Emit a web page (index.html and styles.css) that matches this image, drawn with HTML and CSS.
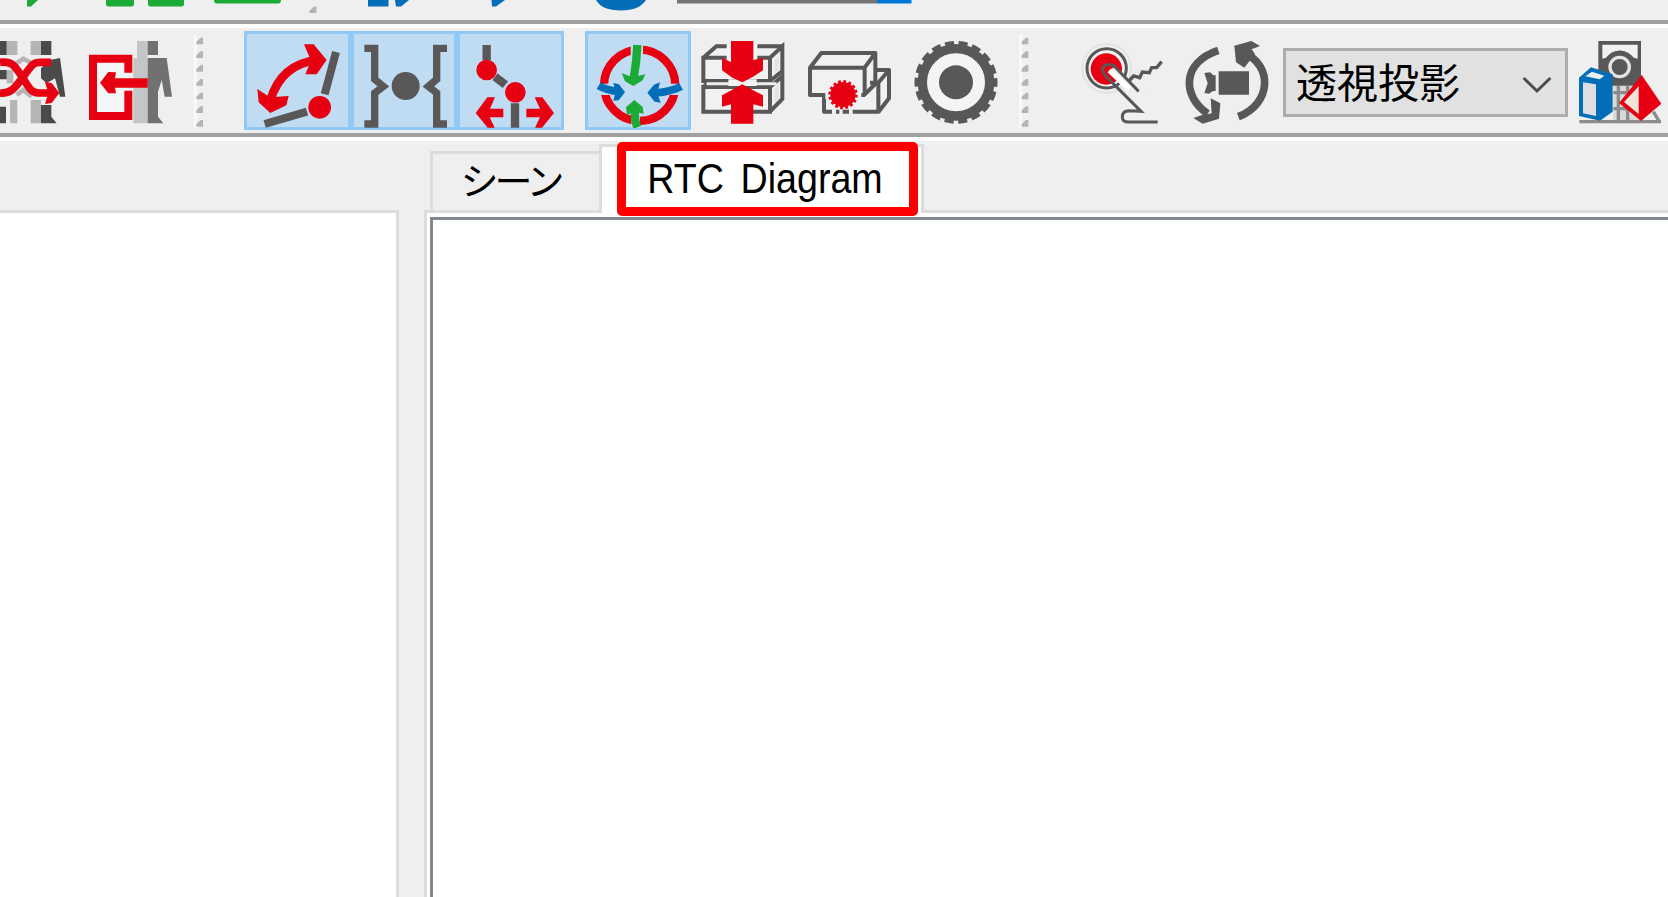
FILE: index.html
```html
<!DOCTYPE html>
<html lang="ja">
<head>
<meta charset="utf-8">
<title>RTC Diagram</title>
<link rel="stylesheet" href="styles.css">
</head>
<body>
<svg width="0" height="0" class="defs">
  <defs>
    <g id="dot"><path d="M0 12V20H20V0H13Z" fill="#b4b4b4"/></g>
    <g id="grip">
      <path d="M-3 -10V272" stroke="#f8f8f8" stroke-width="10"/>
      <use href="#dot"/><use href="#dot" y="41"/><use href="#dot" y="82"/><use href="#dot" y="124"/><use href="#dot" y="165"/><use href="#dot" y="206"/><use href="#dot" y="247"/>
    </g>
  </defs>
</svg>
<div class="app">
  <header class="toolbar toolbar-top">
    <svg width="1668" height="20" viewBox="0 0 1668 20">
      <g fill="#1aaa35">
        <path d="M27 0H38L31 6.500H27Z"/><path d="M106 0H134V4Q134 6.500 131 6.500H109Q106 6.500 106 4Z"/><path d="M148 0H184V4Q184 6.500 181 6.500H151Q148 6.500 148 4Z"/><path d="M214 0H281Q281 3.500 278 3.500H217Q214 3.500 214 0Z"/>
      </g>
      <path d="M309 11L314 6.500H316.500V13H310Z" fill="#b4b4b4"/>
      <g fill="#036eb8"><path d="M368 0H388.500V6.500H368Z"/><path d="M395 0H409L401 6.500H396Z"/><path d="M491.500 0H505L496 6.500H492Z"/><path d="M596 0Q602 10.500 621 10.500Q639 10.500 646 0Z"/></g>
      <path d="M677 0H877V3.500H677Z" fill="#747474"/><path d="M877 0H911.500V3.500H877Z" fill="#0078d7"/>
    </svg>
  </header>
  <div class="toolbar toolbar-main">
    <svg width="76" height="105" viewBox="0 84 228 315">
      <path d="M20 123H52V165H20ZM92 123H123V165H92ZM20 210H40V250H20ZM30 300H52V370H30ZM92 300H123V370H92Z" fill="#b5b5b6"/>
      <path d="M0 123H20V165H0ZM123 123H154V165H123ZM0 210H20V238H0ZM0 320H18V370H0ZM123 315H154V350L170 370H123ZM123 205L150 180L180 174L196 290H180L165 235L140 250L123 235Z" fill="#4c4949"/>
      <path d="M50 190L70 176L95 190M50 285L70 270L95 290" fill="none" stroke="#b5b5b6" stroke-width="14"/>
      <path d="M0 187C35 183 43 195 66 230C88 265 93 279 120 279H160M0 279C35 281 45 263 70 230C95 196 98 187 120 187H153" fill="none" stroke="#e60012" stroke-width="23"/>
      <path d="M135 246L155 249L178 279L155 309L135 312L145 280Z" fill="#e60012"/>
    </svg>
    <svg width="109" height="105" viewBox="228 84 327 315">
      <path d="M411 123H443V370H400V175H411Z" fill="#c3c6c7"/>
      <path d="M443 123H474V165H443ZM443 174H500L516 290H494L485 240L474 275V350L490 370H443Z" fill="#727171"/>
      <path d="M279 176H385V348H279Z" fill="#f2f6f6"/>
      <path d="M385 218V176H279V348H385V272" fill="none" stroke="#e60012" stroke-width="24"/>
      <path d="M443 235V263H345L348 280L325 280L300 248L325 216L348 217L345 235Z" fill="#e60012"/>
    </svg>
    <svg width="59" height="105" viewBox="555 84 177 315"><use href="#grip" x="589" y="113"/></svg>
    <button class="tool checked">
      <svg width="101" height="94" viewBox="22 101 303 282">
        <path d="M289 155L255 282M75 371L202 334" stroke="#595757" stroke-width="24"/>
        <path d="M92 300Q125 190 235 179" fill="none" stroke="#e60012" stroke-width="26"/>
        <path d="M193 132H222L261 179L231 222H197L214 181ZM53 266L91 291L147 287L140 315L92 338L57 306Z" fill="#e60012"/>
        <circle cx="240" cy="321" r="34" fill="#e60012"/>
      </svg>
    </button>
    <button class="tool checked">
      <svg width="101" height="94" viewBox="339 101 303 282">
        <path d="M373 144H404V237L430 258L404 278V371H373M621 144H590V237L565 258L590 278V371H621" fill="none" stroke="#595757" stroke-width="22"/>
        <circle cx="497" cy="257" r="42" fill="#595757"/>
      </svg>
    </button>
    <button class="tool checked">
      <svg width="101" height="94" viewBox="660 101 303 282">
        <path d="M740 134V210L825 275V382" fill="none" stroke="#595757" stroke-width="25"/>
        <path d="M740 180V210L765 229M797 252L825 275V309" fill="none" stroke="#c0dcf3" stroke-width="28"/>
        <circle cx="740" cy="209" r="31" fill="#e60012"/><circle cx="826" cy="276" r="31" fill="#e60012"/>
        <path d="M790 325V351H749L764 382H743L707 338L742 291H765L750 325ZM859 325H900L884 291H907L942 338L906 382H885L900 351H859Z" fill="#e60012"/>
      </svg>
    </button>
    <span class="gap"></span>
    <button class="tool checked alone">
      <svg width="100" height="94" viewBox="54 101 300 282">
        <circle cx="209" cy="255" r="107" fill="none" stroke="#e60012" stroke-width="25"/>
        <path d="M182 130H219V180H182ZM184 335H210V383H184ZM82 250H125V284H82ZM300 250H335V284H300Z" fill="#c0dcf3"/>
        <path d="M202 134Q200 185 191 235M196 325Q191 355 202 381" fill="none" stroke="#1aaa35" stroke-width="25"/>
        <path d="M155 218L177 227L202 227L226 222L218 240L190 257L165 243ZM193 299L218 320L221 340L196 334L171 343L168 321Z" fill="#1aaa35"/>
        <path d="M86 256Q110 270 142 273M333 258Q305 274 255 278" fill="none" stroke="#036eb8" stroke-width="23"/>
        <path d="M130 248L147 252L165 276L146 300L130 301L137 274ZM270 246L252 253L232 277L254 304L272 307L262 278Z" fill="#036eb8"/>
      </svg>
    </button>
    <svg width="104" height="105" viewBox="363 84 312 315">
      <path d="M400 173H600V243H400ZM600 173L637 139V213L600 243M400 173L439 139H637M400 261H600V335H400ZM600 261L637 229V297L600 335M400 261L420 243" fill="#f1f1f1" stroke="#595757" stroke-width="12"/>
      <path d="M613 180L626 168V210L613 221ZM613 266L626 255V295L613 310Z" fill="#e3e3e3"/>
      <path d="M410 247H620V256H410Z" fill="#efefef"/>
      <path d="M470 132H562V185H470ZM475 238H560V258H475Z" fill="#f4f4f4"/>
      <path d="M483 123H550V180L579 174V211L548 231L517 247L487 233L456 211V174L483 186ZM517 253L548 270L579 286V320L550 313V371H483V313L456 320V286L487 269Z" fill="#e60012"/>
    </svg>
    <svg width="110" height="105" viewBox="15 84 330 315">
      <g fill="#f1f1f1" stroke="#595757" stroke-width="12" stroke-linejoin="round">
        <path d="M102 285V335H266L297 295V210H259"/>
        <path d="M60 203L94 159H256V252L222 285H60Z"/>
        <path d="M60 203H224V285M224 203L256 159M240 248H265L297 210M265 248V335" fill="none"/>
      </g>
      <path d="M106 276H214V297H106Z" fill="#f1f1f1"/>
      <path d="M126 328H138V342H126ZM148 328H158V342H148ZM177 328H188V342H177Z" fill="#f1f1f1"/>
      <circle cx="159" cy="284" r="38" fill="#e60012"/><circle cx="159" cy="284" r="38" fill="none" stroke="#e60012" stroke-width="12" stroke-dasharray="8 6.900"/>
    </svg>
    <svg width="107" height="105" viewBox="345 84 321 315">
      <circle cx="498" cy="247" r="101" fill="#f4f4f4" stroke="#595757" stroke-width="28"/>
      <circle cx="498" cy="247" r="117" fill="none" stroke="#595757" stroke-width="15" stroke-dasharray="27 13.841" stroke-dashoffset="13.500"/>
      <circle cx="498" cy="247" r="51" fill="#595757"/>
    </svg>
    <svg width="58" height="105" viewBox="666 84 174 315"><use href="#grip" x="695" y="113"/></svg>
    <svg width="107" height="105" viewBox="30 84 321 315">
      <circle cx="140" cy="205" r="73" fill="none" stroke="#e3e3e3" stroke-width="6"/>
      <circle cx="140" cy="205" r="59" fill="#f3f3f3" stroke="#595757" stroke-width="9"/>
      <circle cx="139" cy="207" r="47" fill="#e60012"/>
      <path d="M148 211L243 335L185 338V364H290V290L236 274L165 200Z" fill="#efefef"/>
      <path d="M128 211C127 190 155 190 166 202L236 274M128 211Q130 223 145 236L243 334L207 332Q187 333 187 350Q187 366 205 366H293" fill="none" stroke="#595757" stroke-width="9"/>
      <path d="M148 211L208 267" stroke="#fff" stroke-width="16"/>
      <path d="M207 243L221 228L239 233L247 216L268 218L275 203L290 203L305 185" fill="none" stroke="#595757" stroke-width="10"/>
    </svg>
    <svg width="106" height="105" viewBox="351 84 318 315">
      <path d="M475 151C363 188 367 290 443 341M535 350C635 312 640 195 550 158" fill="none" stroke="#595757" stroke-width="23"/>
      <path d="M523 137L574 123L600 138L575 148L585 162L553 203L528 187ZM452 295L481 310L477 356L428 371L400 354L424 346L455 340Z" fill="#595757"/>
      <path d="M476 214H567V284H476ZM433 219L450 217L460 226H467V273H459L447 281L433 279L443 250Z" fill="#595757"/>
    </svg>
    <div class="select">
      <span class="select-text">透視投影</span>
      <svg class="arrow" width="30" height="20" viewBox="757 225 90 60"><path d="M762 234L802 273L842 234" fill="none" stroke="#4d4d4d" stroke-width="9"/></svg>
    </div>
    <svg width="100" height="105" viewBox="894 84 300 315">
      <path d="M985 123H1113V257H985Z" fill="#595757"/><path d="M997 134H1103V176L1080 170Q1050 135 1020 170L997 176Z" fill="#f2f2f2"/>
      <circle cx="1049" cy="201" r="29" fill="#595757" stroke="#e4e4e4" stroke-width="10"/>
      <path d="M1010 180Q1023 157 1049 156Q1077 157 1089 180" fill="none" stroke="#595757" stroke-width="9"/>
      <path d="M1030 258H1110V370H1030Z" fill="#d8d8d8"/><path d="M1045 258V360M1073 258V360M1030 278H1110M1030 326H1110M928 365H1173M1150 335L1168 365" fill="none" stroke="#8c8c8c" stroke-width="10"/>
      <path d="M927 233L963 202L1028 223V335L990 362L927 348Z" fill="#036eb8"/><path d="M939 247L978 253V348L939 340Z" fill="#dedfe3"/><path d="M946 229L966 215L1003 227L989 238Z" fill="#e9eff3"/>
      <path d="M1115 225L1174 311L1113 363L1047 309Z" fill="#e60012"/><path d="M1106 259V342L1062 306Z" fill="#f1e4d7"/>
    </svg>
  </div>
  <main class="workspace">
    <section class="side"></section>
    <section class="view">
      <nav class="tabs">
        <div class="tab scene"><span class="scene-text">シーン</span></div>
        <div class="tab active"><span class="diagram-text">RTC Diagram</span><div class="highlight"></div></div>
      </nav>
      <div class="page"><div class="canvas"></div></div>
    </section>
  </main>
</div>
</body>
</html>
```
FILE: styles.css
```css
* { box-sizing: border-box; }
body { margin: 0; background: #efefef; overflow: hidden; font-family: "Liberation Sans", "Noto Sans CJK JP", sans-serif; color: #000; }
.defs { display: none; }
.app { width: 1668px; height: 897px; display: flex; flex-direction: column; overflow: hidden; }
.toolbar { flex: none; display: flex; border-bottom: 4px solid #a0a0a0; box-shadow: 0 4px 0 #fff; }
.toolbar svg { display: block; flex: none; }
.toolbar-top { height: 24px; }
.toolbar-main { height: 109px; margin-top: 4px; align-items: center; }
.tool { flex: none; width: 106.67px; height: 99px; padding: 0; border: 3px solid #90c8f6; background: #c0dcf3; display: flex; align-items: center; justify-content: center; }
.alone { width: 106px; }
.gap { flex: none; width: 21px; }
.select { flex: none; width: 285px; height: 69px; margin-top: 4px; border: 3px solid #adadad; background: #e1e1e1; display: flex; align-items: center; justify-content: space-between; padding: 0 13px 0 10px; }
.select-text { font: 400 41px/1 "Noto Sans CJK JP", sans-serif; white-space: nowrap; padding-bottom: 5px; }
.select .arrow { margin-top: 4px; }
.workspace { flex: 1; min-height: 0; display: flex; margin-top: 4px; }
.side { width: 399px; margin-top: 69px; border-top: 3px solid #dcdcdc; border-right: 3px solid #dcdcdc; background: #fff; }
.view { flex: 1; margin-left: 25px; display: flex; flex-direction: column; }
.tabs { height: 69px; display: flex; align-items: flex-end; padding-left: 6px; }
.tab { flex: none; border: 3px solid #dcdcdc; border-bottom: 0; display: flex; align-items: center; justify-content: center; white-space: nowrap; }
.scene { width: 169px; height: 59px; border-right: 0; background: #efefef; }
.active { position: relative; z-index: 1; width: 325px; height: 69px; margin-bottom: -3px; background: #fff; }
.scene-text { font: 400 38px/1 "Noto Sans CJK JP", sans-serif; letter-spacing: -4px; padding: 0 11px 7px 0; }
.diagram-text { font-size: 43px; line-height: 1; word-spacing: 7px; transform: scaleX(.875); padding: 0 0 4px 8px; }
.highlight { position: absolute; left: 15px; top: -5px; width: 301px; height: 74px; border: 9px solid #f00; border-radius: 5px; }
.page { flex: 1; border-top: 3px solid #dcdcdc; border-left: 3px solid #dcdcdc; background: #fff; padding: 4px 0 0 3px; }
.canvas { height: 100%; background: #fff; border-top: 3px solid #828790; border-left: 3px solid #828790; }
```
